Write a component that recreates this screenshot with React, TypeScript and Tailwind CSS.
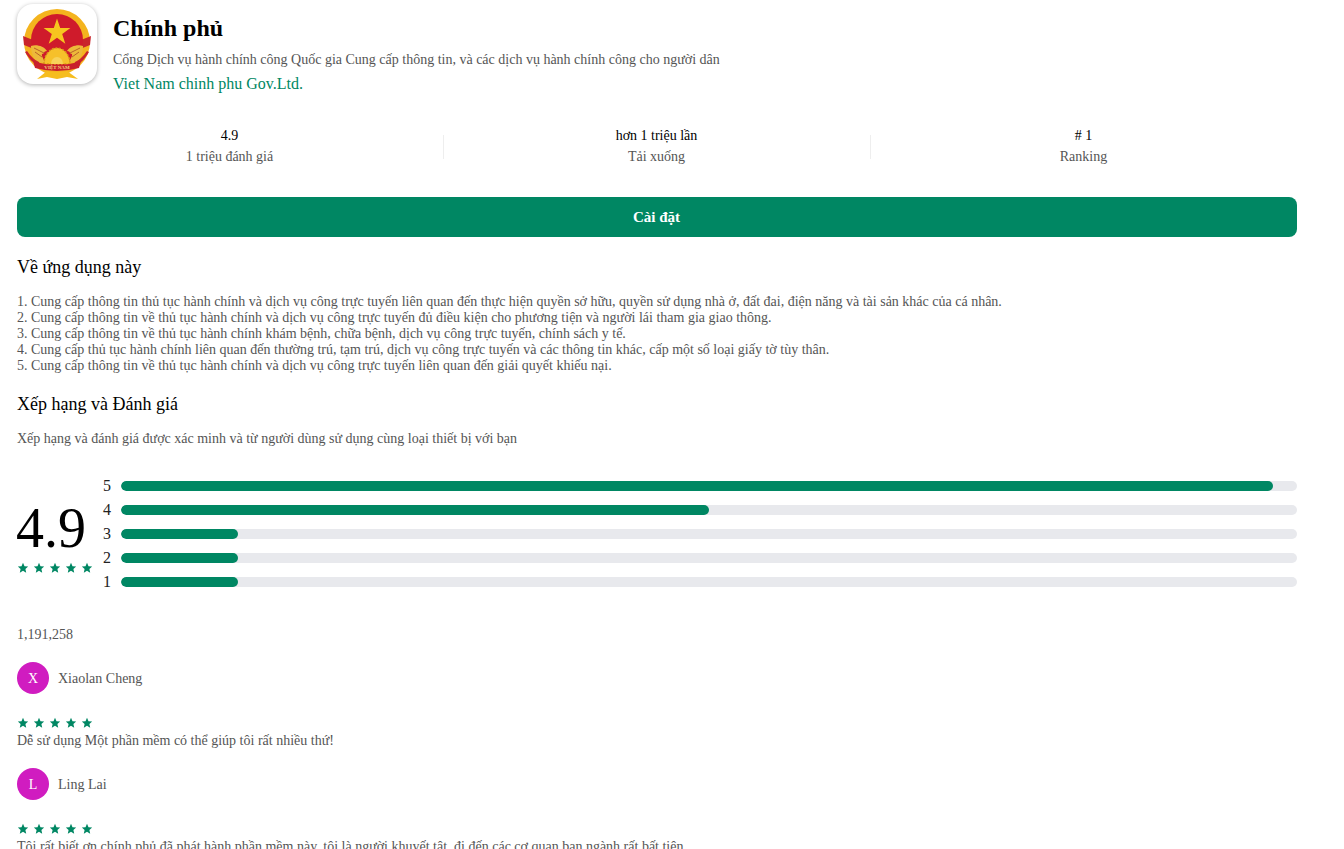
const GREEN = "#008763";

function Star() {
  return (
    <svg width="12" height="12" viewBox="0 0 24 24" fill="#008763" className="block shrink-0">
      <path d="M12 1.5l3 7 7.3.7-5.5 4.9 1.6 7.4L12 17.7 5.6 21.5l1.6-7.4L1.7 9.2 9 8.5z" />
    </svg>
  );
}

function Stars() {
  return (
    <div className="flex gap-1">
      <Star />
      <Star />
      <Star />
      <Star />
      <Star />
    </div>
  );
}

function Emblem() {
  return (
    <svg width="80" height="80" viewBox="0 0 80 80" className="block">
      <circle cx="40" cy="38" r="33" fill="#f4b41e" />
      <path d="M6 32 L16 36 L17 45 L7 41 Z" fill="#c9252b" />
      <path d="M74 32 L64 36 L63 45 L73 41 Z" fill="#c9252b" />
      <circle cx="40" cy="36" r="26" fill="#cf1b2b" />
      <path d="M40 14.5l3.2 9.6h10.2l-8.2 6 3.1 9.7-8.3-6-8.3 6 3.1-9.7-8.2-6h10.2z" fill="#f7c51f" />
      <path d="M14 42 C19 40 27 42 30 47 C26 47 28 50 25 50 C24 53 28 55 27 59 L20 58 C16 54 14 48 14 42Z" fill="#edb93a" />
      <path d="M66 42 C61 40 53 42 50 47 C54 47 52 50 55 50 C56 53 52 55 53 59 L60 58 C64 54 66 48 66 42Z" fill="#edb93a" />
      <path d="M17 44 L27 49 M18 48 L25 53 M63 44 L53 49 M62 48 L55 53" stroke="#b9632a" strokeWidth="1" fill="none" />
      <path d="M8 48 C12 55 17 60 23 62 L22 58 C17 56 13 51 10 47 Z" fill="#c9252b" />
      <path d="M72 48 C68 55 63 60 57 62 L58 58 C63 56 67 51 70 47 Z" fill="#c9252b" />
      <path d="M27 60 A13 16 0 0 1 53 60 Z" fill="#f6c02a" stroke="#d99a1a" strokeWidth="1.5" strokeDasharray="2 1.5" />
      <path d="M34 60 A6 7 0 0 1 46 60 Z" fill="#f8d25a" />
      <path d="M16 57 Q40 65 64 57 L62 64 Q40 70 18 64 Z" fill="#c8202c" />
      <text x="40" y="65" textAnchor="middle" fontSize="5" fontWeight="700" fill="#f6d27a">VIỆT NAM</text>
      <path d="M30 67 Q40 69 50 67 L61 75 L50 73 L40 75 L30 73 L20 75 Z" fill="#f6bd1e" />
    </svg>
  );
}

function Stat({ top, bottom }: { top: string; bottom: string }) {
  return (
    <div className="flex-1 text-center text-[14px] leading-[21px] pr-px">
      <div className="text-black">{top}</div>
      <div className="text-[#555555]">{bottom}</div>
    </div>
  );
}

function Divider() {
  return <div className="w-px h-[24px] mt-[2px] bg-[#eeeeee] shrink-0" />;
}

function Bar({ n, w }: { n: number; w: string }) {
  return (
    <div className="flex items-center h-[24px]">
      <div className="w-[24px] pr-[10px] text-right text-[16px] text-[#222222]">{n}</div>
      <div className="flex-1 h-[10px] rounded-full bg-[#e8e9ed] overflow-hidden">
        <div className="h-full rounded-full bg-[#008763]" style={{ width: w }} />
      </div>
    </div>
  );
}

function Person({ letter, name }: { letter: string; name: string }) {
  return (
    <div className="flex items-center gap-[9px]">
      <div className="w-8 h-8 rounded-full bg-[#d01cc0] text-white text-[14px] flex items-center justify-center">{letter}</div>
      <div className="text-[14px] text-[#555555]">{name}</div>
    </div>
  );
}

export default function App() {
  return (
    <div className="h-[849px] overflow-hidden bg-white" style={{ fontFamily: '"Liberation Serif", "Noto Serif", serif', color: "#555555" }}>
      <div className="ml-[17px] w-[1280px] pt-[4px]">
        <div className="flex gap-4">
          <div className="w-20 h-20 rounded-2xl bg-white shadow-[0_1px_4px_rgba(0,0,0,0.3)] overflow-hidden shrink-0">
            <Emblem />
          </div>
          <div>
            <div className="text-[24px] font-bold text-black leading-[28px] mt-[10px]">Chính phủ</div>
            <div className="text-[14px] leading-[20px] mt-[8px] text-[#555555]">Cổng Dịch vụ hành chính công Quốc gia Cung cấp thông tin, và các dịch vụ hành chính công cho người dân</div>
            <div className="text-[16px] leading-[20px] mt-[4px]" style={{ color: GREEN }}>Viet Nam chinh phu Gov.Ltd.</div>
          </div>
        </div>

        <div className="flex items-center mt-[31px]">
          <Stat top="4.9" bottom="1 triệu đánh giá" />
          <Divider />
          <Stat top="hơn 1 triệu lần" bottom="Tải xuống" />
          <Divider />
          <Stat top="# 1" bottom="Ranking" />
        </div>

        <div className="mt-[30px] h-10 rounded-lg bg-[#008763] text-white font-bold text-[15px] flex items-center justify-center pr-px">Cài đặt</div>

        <div className="mt-[19px] text-[18px] leading-[22px] text-black">Về ứng dụng này</div>
        <div className="mt-[16px] text-[14px] leading-[16px]">
          <div>1. Cung cấp thông tin thủ tục hành chính và dịch vụ công trực tuyến liên quan đến thực hiện quyền sở hữu, quyền sử dụng nhà ở, đất đai, điện năng và tài sản khác của cá nhân.</div>
          <div>2. Cung cấp thông tin về thủ tục hành chính và dịch vụ công trực tuyến đủ điều kiện cho phương tiện và người lái tham gia giao thông.</div>
          <div>3. Cung cấp thông tin về thủ tục hành chính khám bệnh, chữa bệnh, dịch vụ công trực tuyến, chính sách y tế.</div>
          <div>4. Cung cấp thủ tục hành chính liên quan đến thường trú, tạm trú, dịch vụ công trực tuyến và các thông tin khác, cấp một số loại giấy tờ tùy thân.</div>
          <div>5. Cung cấp thông tin về thủ tục hành chính và dịch vụ công trực tuyến liên quan đến giải quyết khiếu nại.</div>
        </div>

        <div className="mt-[19px] text-[18px] leading-[22px] text-black">Xếp hạng và Đánh giá</div>
        <div className="mt-[16px] text-[14px] leading-[16px]">Xếp hạng và đánh giá được xác minh và từ người dùng sử dụng cùng loại thiết bị với bạn</div>

        <div className="flex mt-[27px]">
          <div className="w-[80px] shrink-0 pt-[26px]">
            <div className="text-[56px] leading-[56px] text-black -ml-px">4.9</div>
            <div className="mt-[6px]"><Stars /></div>
          </div>
          <div className="flex-1">
            <Bar n={5} w="98%" />
            <Bar n={4} w="50%" />
            <Bar n={3} w="9.95%" />
            <Bar n={2} w="9.95%" />
            <Bar n={1} w="9.95%" />
          </div>
        </div>

        <div className="mt-[31px] text-[14px] leading-[20px]">1,191,258</div>

        <div className="mt-[17px]"><Person letter="X" name="Xiaolan Cheng" /></div>
        <div className="mt-[23px]"><Stars /></div>
        <div className="text-[14px] leading-[18px] mt-[3px]">Dễ sử dụng Một phần mềm có thể giúp tôi rất nhiều thứ!</div>

        <div className="mt-[18px]"><Person letter="L" name="Ling Lai" /></div>
        <div className="mt-[23px]"><Stars /></div>
        <div className="text-[14px] leading-[18px] mt-[3px]">Tôi rất biết ơn chính phủ đã phát hành phần mềm này, tôi là người khuyết tật, đi đến các cơ quan ban ngành rất bất tiện.</div>
      </div>
    </div>
  );
}
